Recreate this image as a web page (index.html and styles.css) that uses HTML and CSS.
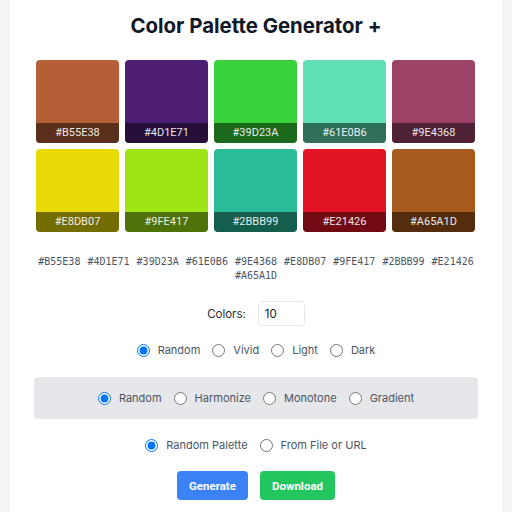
FILE: index.html
```html
<!DOCTYPE html>
<html lang="en">
<head>
<meta charset="utf-8">
<title>Color Palette Generator +</title>
<link rel="stylesheet" href="styles.css">
</head>
<body>
<main class="card">
  <h1 class="title">Color Palette Generator +</h1>
  <div class="grid">
    <div class="swatch" style="background:#B55E38"><span class="code">#B55E38</span></div>
    <div class="swatch" style="background:#4D1E71"><span class="code">#4D1E71</span></div>
    <div class="swatch" style="background:#39D23A"><span class="code">#39D23A</span></div>
    <div class="swatch" style="background:#61E0B6"><span class="code">#61E0B6</span></div>
    <div class="swatch" style="background:#9E4368"><span class="code">#9E4368</span></div>
    <div class="swatch" style="background:#E8DB07"><span class="code">#E8DB07</span></div>
    <div class="swatch" style="background:#9FE417"><span class="code">#9FE417</span></div>
    <div class="swatch" style="background:#2BBB99"><span class="code">#2BBB99</span></div>
    <div class="swatch" style="background:#E21426"><span class="code">#E21426</span></div>
    <div class="swatch" style="background:#A65A1D"><span class="code">#A65A1D</span></div>
  </div>
  <p class="hexlist">#B55E38 #4D1E71 #39D23A #61E0B6 #9E4368 #E8DB07 #9FE417 #2BBB99 #E21426 #A65A1D</p>
  <div class="count-row">
    <label for="count" class="count-label">Colors:</label>
    <input id="count" class="count-input" type="text" value="10">
  </div>
  <div class="radios row-mode">
    <label class="opt"><input type="radio" name="mode" checked><span>Random</span></label>
    <label class="opt"><input type="radio" name="mode"><span>Vivid</span></label>
    <label class="opt"><input type="radio" name="mode"><span>Light</span></label>
    <label class="opt"><input type="radio" name="mode"><span>Dark</span></label>
  </div>
  <div class="scheme-box">
    <div class="radios">
      <label class="opt"><input type="radio" name="scheme" checked><span>Random</span></label>
      <label class="opt"><input type="radio" name="scheme"><span>Harmonize</span></label>
      <label class="opt"><input type="radio" name="scheme"><span>Monotone</span></label>
      <label class="opt"><input type="radio" name="scheme"><span>Gradient</span></label>
    </div>
  </div>
  <div class="radios row-source">
    <label class="opt"><input type="radio" name="source" checked><span>Random Palette</span></label>
    <label class="opt"><input type="radio" name="source"><span>From File or URL</span></label>
  </div>
  <div class="actions">
    <button class="btn btn-blue" type="button">Generate</button>
    <button class="btn btn-green" type="button">Download</button>
  </div>
</main>
</body>
</html>
```

FILE: styles.css
```css
* { box-sizing: border-box; }
html, body { margin: 0; padding: 0; }
body {
  background: #f3f4f6;
  font-family: Inter, Roboto, "Liberation Sans", sans-serif;
  color: #374151;
  padding: 0 10px;
}
.card {
  background: #fff;
  padding: 12px 24px 20px;
  min-height: 512px;
}
.title {
  margin: 0;
  text-align: center;
  font-size: 20.4px;
  line-height: 28px;
  font-weight: 700;
  color: #111827;
}
.grid {
  margin: 20px 3px 0 2px;
  display: grid;
  grid-template-columns: repeat(5, 1fr);
  gap: 6px;
}
.swatch {
  height: 83px;
  border-radius: 4px;
  display: flex;
  flex-direction: column;
  justify-content: flex-end;
  overflow: hidden;
}
.code {
  display: block;
  height: 20px;
  line-height: 20px;
  background: rgba(0, 0, 0, 0.5);
  color: rgba(255, 255, 255, 0.92);
  font-family: Roboto, "Liberation Sans", sans-serif;
  font-size: 11px;
  text-align: center;
}
.hexlist {
  margin: 23px 0 0;
  text-align: center;
  font-family: "DejaVu Sans Mono", monospace;
  font-size: 10px;
  line-height: 14px;
  color: #4b5563;
  word-spacing: 1px;
}
.count-row {
  margin-top: 18px;
  display: flex;
  justify-content: center;
  align-items: center;
  gap: 12px;
  font-size: 11.5px;
  color: #1f2937;
}
.count-input {
  width: 47px;
  height: 25px;
  border: 1px solid #e5e7eb;
  border-radius: 4px;
  padding: 0 6px;
  font: inherit;
  font-size: 11.5px;
  color: #111827;
}
.radios {
  display: flex;
  justify-content: center;
  align-items: center;
  gap: 12px;
  font-size: 11px;
  color: #4b5563;
}
.opt {
  display: inline-flex;
  align-items: center;
  gap: 8px;
}
.opt input {
  margin: 0;
  width: 13px;
  height: 13px;
}
.row-mode { margin-top: 17px; }
.scheme-box {
  margin-top: 20px;
  background: #e5e7eb;
  border-radius: 4px;
  height: 42px;
  display: flex;
  align-items: center;
  justify-content: center;
}
.row-source { margin-top: 19px; }
.actions {
  margin-top: 19px;
  display: flex;
  justify-content: center;
  gap: 12px;
}
.btn {
  border: 0;
  border-radius: 4px;
  height: 29px;
  padding: 0 12px;
  font-family: Roboto, "Liberation Sans", sans-serif;
  font-weight: 700;
  font-size: 11.5px;
  color: #fff;
}
.btn-blue { background: #3b82f6; }
.btn-green { background: #22c55e; }
```
